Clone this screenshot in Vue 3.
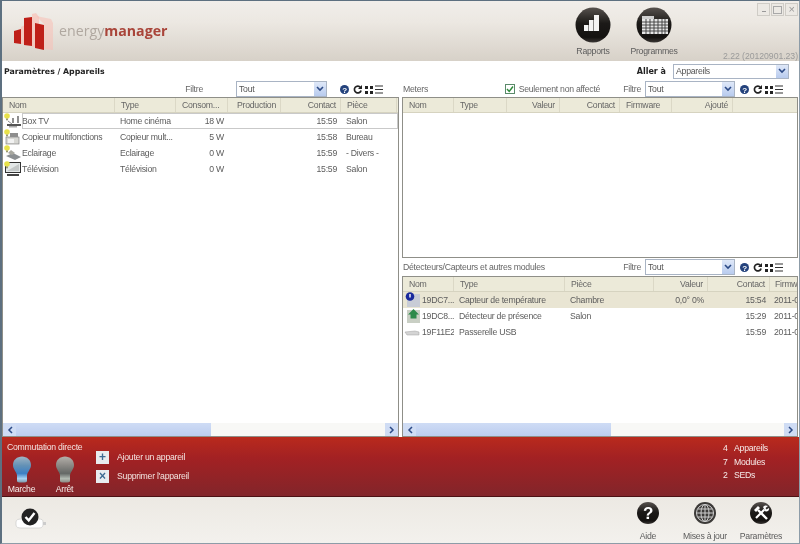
<script setup>
const leftCols = [
  { key: 'nom', label: 'Nom', w: 112 },
  { key: 'type', label: 'Type', w: 61 },
  { key: 'conso', label: 'Consom...', w: 52, right: true, headLeft: true },
  { key: 'prod', label: 'Production', w: 53, right: true },
  { key: 'contact', label: 'Contact', w: 60, right: true },
  { key: 'piece', label: 'Pièce', w: 56 }
]
const leftRows = [
  { icon: 'box', nom: 'Box TV', type: 'Home cinéma', conso: '18 W', prod: '', contact: '15:59', piece: 'Salon', focus: true },
  { icon: 'copy', nom: 'Copieur multifonctions', type: 'Copieur mult...', conso: '5 W', prod: '', contact: '15:58', piece: 'Bureau' },
  { icon: 'lamp', nom: 'Eclairage', type: 'Eclairage', conso: '0 W', prod: '', contact: '15:59', piece: '- Divers -' },
  { icon: 'tv', nom: 'Télévision', type: 'Télévision', conso: '0 W', prod: '', contact: '15:59', piece: 'Salon' }
]
const meterCols = [
  { key: 'nom', label: 'Nom', w: 51 },
  { key: 'type', label: 'Type', w: 53 },
  { key: 'valeur', label: 'Valeur', w: 53, right: true },
  { key: 'contact', label: 'Contact', w: 60, right: true },
  { key: 'firmware', label: 'Firmware', w: 52 },
  { key: 'ajoute', label: 'Ajouté', w: 61, right: true }
]
const moduleCols = [
  { key: 'nom', label: 'Nom', w: 51 },
  { key: 'type', label: 'Type', w: 111 },
  { key: 'piece', label: 'Pièce', w: 89 },
  { key: 'valeur', label: 'Valeur', w: 54, right: true },
  { key: 'contact', label: 'Contact', w: 62, right: true },
  { key: 'firmware', label: 'Firmw', w: 28 }
]
const moduleRows = [
  { icon: 'sensor', nom: '19DC7...', type: 'Capteur de température', piece: 'Chambre', valeur: '0,0°  0%', contact: '15:54', firmware: '2011-0', selected: true },
  { icon: 'home', nom: '19DC8...', type: 'Détecteur de présence', piece: 'Salon', valeur: '', contact: '15:29', firmware: '2011-0' },
  { icon: 'usb', nom: '19F11E2', type: 'Passerelle USB', piece: '', valeur: '', contact: '15:59', firmware: '2011-0' }
]
const counts = [
  { n: 4, label: 'Appareils' },
  { n: 7, label: 'Modules' },
  { n: 2, label: 'SEDs' }
]
</script>

<template>
  <div class="window">
    <header class="top">
      <div class="logo">
        <svg width="58" height="46" viewBox="0 0 58 46">
          <path d="M9 19l4 -2v19H9zM20 6l4 -1 3 4v7l-4 -1v24h-3z" fill="#f8c0b6" opacity="0.7" />
          <path d="M24 8l15 3 2 4v27l-9 -1V16z" fill="#f8c0b6" opacity="0.55" />
          <path d="M2 23l7 -2v15l-7 -1z" fill="#bf1f18" />
          <path d="M12 10l8 -1v29l-8 -1z" fill="#bf1f18" />
          <path d="M23 15l9 2v25l-9 -2z" fill="#bf1f18" />
        </svg>
        <span class="logo-text">energy<b>manager</b></span>
      </div>
      <nav class="top-nav">
        <div class="round-btn rapports">
          <svg width="36" height="36" viewBox="0 0 36 36">
            <defs>
              <linearGradient id="blk" x1="0" y1="0" x2="0" y2="1">
                <stop offset="0" stop-color="#57524e" />
                <stop offset="0.45" stop-color="#1c1a18" />
                <stop offset="0.85" stop-color="#141210" />
                <stop offset="1" stop-color="#3a3634" />
              </linearGradient>
            </defs>
            <circle cx="18" cy="18" r="17.500" fill="url(#blk)" />
            <path d="M9 24v-6h4.500v6zM14 24V13h4.500v11zM19 24V8h5v16z" fill="#f4f4f4" />
          </svg>
          <span>Rapports</span>
        </div>
        <div class="round-btn progs">
          <svg width="36" height="36" viewBox="0 0 36 36">
            <circle cx="18" cy="18" r="17.500" fill="url(#blk)" />
            <rect x="6" y="12" width="26" height="15" fill="#e6e6e6" />
            <rect x="6" y="9" width="12" height="3" fill="#cfcfcf" />
            <path d="M6 15h26M6 18h26M6 21h26M6 24h26M10 12v15M14 12v15M18 12v15M22 12v15M26 12v15M29 12v15" stroke="#3a3a3a" stroke-width="0.900" />
          </svg>
          <span>Programmes</span>
        </div>
      </nav>
      <div class="top-right">
        <div class="win-btns">
          <span class="win-btn"><i class="w-min"></i></span>
          <span class="win-btn"><i class="w-max"></i></span>
          <span class="win-btn">×</span>
        </div>
        <div class="version">2.22 (20120901.23)</div>
      </div>
    </header>

    <main class="body">
      <section class="panel left">
        <div class="crumb-row">
          <span class="crumb">Paramètres / Appareils</span>
        </div>
        <div class="toolbar left-bar">
          <span class="lbl filtre-left">Filtre</span>
          <div class="select f-select">
            <span>Tout</span>
            <i class="sel-arrow"><svg width="8" height="6" viewBox="0 0 8 6"><path d="M1 1l3 3 3 -3" fill="none" stroke="#2c4a86" stroke-width="1.600" /></svg></i>
          </div>
          <div class="tools">
            <svg width="43" height="11" viewBox="0 0 43 11">
              <circle cx="4.500" cy="5.500" r="4.500" fill="#24427c" />
              <text x="4.500" y="8.500" class="q">?</text>
              <path d="M20.500 3.400a3.400 3.400 0 1 0 .6 3" fill="none" stroke="#222" stroke-width="1.700" />
              <path d="M22 1v4h-4z" fill="#222" />
              <path d="M25 2h3v3h-3zM30 2h3v3h-3zM25 7h3v3h-3zM30 7h3v3h-3z" fill="#222" />
              <path d="M35 2h8M35 5.500h8M35 9h8" stroke="#333" stroke-width="1.200" />
            </svg>
          </div>
        </div>
        <div class="grid-box full">
          <div class="grid-head">
            <div v-for="c in leftCols" :key="c.key" class="hcell" :class="{ right: c.right && !c.headLeft }" :style="{ width: c.w + 'px' }">{{ c.label }}</div>
          </div>
          <div class="grid-body">
            <div v-for="r in leftRows" :key="r.nom" class="row" :class="{ focus: r.focus }">
              <div v-for="c in leftCols" :key="c.key" class="cell" :class="{ right: c.right }" :style="{ width: c.w + 'px' }">
                <template v-if="c.key === 'nom'">
                  <svg class="row-icon" width="18" height="16" viewBox="0 0 18 16">
                    <g v-if="r.icon === 'box'">
                      <rect x="3" y="11" width="14" height="2" fill="#555" />
                      <path d="M9 5v5M14 3v7" stroke="#555" stroke-width="1.300" />
                      <path d="M4 8l4 3" stroke="#888" />
                      <rect x="5" y="13" width="8" height="1.500" fill="#aaa" />
                    </g>
                    <g v-if="r.icon === 'copy'">
                      <rect x="2" y="8" width="13" height="7" fill="#d8d8d4" stroke="#777" stroke-width="0.600" />
                      <rect x="6" y="4" width="8" height="4" fill="#8e8e8e" />
                      <rect x="4" y="10" width="6" height="4" fill="#f2f2f2" />
                    </g>
                    <g v-if="r.icon === 'lamp'">
                      <path d="M2 11l7 -3 8 4 -6 3z" fill="#8b8f92" />
                      <path d="M4 8l3 -3 4 3 -3 2z" fill="#a8a8a0" />
                    </g>
                    <g v-if="r.icon === 'tv'">
                      <rect x="1.500" y="1.500" width="15" height="10" fill="#e4e8e8" stroke="#333" stroke-width="1" />
                      <path d="M3 10l12 -7v7z" fill="#c4c8c8" />
                      <rect x="3" y="13" width="12" height="2" fill="#444" />
                    </g>
                    <circle cx="3" cy="3" r="2.800" fill="#e8e24a" />
                    <rect x="2" y="5.500" width="2" height="1.800" fill="#9a9a70" />
                  </svg>
                </template>
                <span class="cell-text">{{ r[c.key] }}</span>
              </div>
            </div>
          </div>
          <div class="scroll">
            <i class="sc-btn"><svg width="6" height="8" viewBox="0 0 6 8"><path d="M5 1L2 4l3 3" fill="none" stroke="#2c4a86" stroke-width="1.500" /></svg></i>
            <div class="sc-track"><div class="sc-thumb left-thumb"></div></div>
            <i class="sc-btn"><svg width="6" height="8" viewBox="0 0 6 8"><path d="M1 1l3 3 -3 3" fill="none" stroke="#2c4a86" stroke-width="1.500" /></svg></i>
          </div>
        </div>
      </section>

      <section class="panel right-panel">
        <div class="crumb-row goto">
          <b>Aller à</b>
          <div class="select goto-select">
            <span>Appareils</span>
            <i class="sel-arrow"><svg width="8" height="6" viewBox="0 0 8 6"><path d="M1 1l3 3 3 -3" fill="none" stroke="#2c4a86" stroke-width="1.600" /></svg></i>
          </div>
        </div>
        <div class="toolbar r-bar">
          <span class="lbl sect">Meters</span>
          <span class="check"><svg width="8" height="8" viewBox="0 0 8 8"><path d="M1 4l2.200 2.400L7 1.500" fill="none" stroke="#2f8a3a" stroke-width="1.500" /></svg></span>
          <span class="lbl check-lbl">Seulement non affecté</span>
          <span class="lbl">Filtre</span>
          <div class="select r-select">
            <span>Tout</span>
            <i class="sel-arrow"><svg width="8" height="6" viewBox="0 0 8 6"><path d="M1 1l3 3 3 -3" fill="none" stroke="#2c4a86" stroke-width="1.600" /></svg></i>
          </div>
          <div class="tools">
            <svg width="43" height="11" viewBox="0 0 43 11">
              <circle cx="4.500" cy="5.500" r="4.500" fill="#24427c" />
              <text x="4.500" y="8.500" class="q">?</text>
              <path d="M20.500 3.400a3.400 3.400 0 1 0 .6 3" fill="none" stroke="#222" stroke-width="1.700" />
              <path d="M22 1v4h-4z" fill="#222" />
              <path d="M25 2h3v3h-3zM30 2h3v3h-3zM25 7h3v3h-3zM30 7h3v3h-3z" fill="#222" />
              <path d="M35 2h8M35 5.500h8M35 9h8" stroke="#333" stroke-width="1.200" />
            </svg>
          </div>
        </div>
        <div class="grid-box meters">
          <div class="grid-head">
            <div v-for="c in meterCols" :key="c.key" class="hcell" :class="{ right: c.right }" :style="{ width: c.w + 'px' }">{{ c.label }}</div>
          </div>
        </div>
        <div class="toolbar r-bar second">
          <span class="lbl sect">Détecteurs/Capteurs et autres modules</span>
          <span class="lbl">Filtre</span>
          <div class="select r-select">
            <span>Tout</span>
            <i class="sel-arrow"><svg width="8" height="6" viewBox="0 0 8 6"><path d="M1 1l3 3 3 -3" fill="none" stroke="#2c4a86" stroke-width="1.600" /></svg></i>
          </div>
          <div class="tools">
            <svg width="43" height="11" viewBox="0 0 43 11">
              <circle cx="4.500" cy="5.500" r="4.500" fill="#24427c" />
              <text x="4.500" y="8.500" class="q">?</text>
              <path d="M20.500 3.400a3.400 3.400 0 1 0 .6 3" fill="none" stroke="#222" stroke-width="1.700" />
              <path d="M22 1v4h-4z" fill="#222" />
              <path d="M25 2h3v3h-3zM30 2h3v3h-3zM25 7h3v3h-3zM30 7h3v3h-3z" fill="#222" />
              <path d="M35 2h8M35 5.500h8M35 9h8" stroke="#333" stroke-width="1.200" />
            </svg>
          </div>
        </div>
        <div class="grid-box full">
          <div class="grid-head">
            <div v-for="c in moduleCols" :key="c.key" class="hcell" :class="{ right: c.right, fw: c.key === 'firmware' }" :style="{ width: c.w + 'px' }">{{ c.label }}</div>
          </div>
          <div class="grid-body">
            <div v-for="r in moduleRows" :key="r.nom" class="row" :class="{ selected: r.selected }">
              <div v-for="c in moduleCols" :key="c.key" class="cell" :class="{ right: c.right, fw: c.key === 'firmware' }" :style="{ width: c.w + 'px' }">
                <template v-if="c.key === 'nom'">
                  <svg class="row-icon mod-icon" width="16" height="16" viewBox="0 0 16 16">
                    <g v-if="r.icon === 'sensor'">
                      <rect x="3" y="2" width="13" height="13" fill="#c8ccd6" />
                      <circle cx="6" cy="4.500" r="4.300" fill="#1a2a9c" />
                      <rect x="5.300" y="2" width="1.400" height="3.500" fill="#fff" />
                    </g>
                    <g v-if="r.icon === 'home'">
                      <rect x="3" y="2" width="13" height="13" fill="#c9cfc4" />
                      <path d="M9.500 1l5.500 5.500h-2.500v4h-6v-4H4z" fill="#2e8a4a" />
                    </g>
                    <g v-if="r.icon === 'usb'">
                      <path d="M1 8l10 -1 4 1v3H3z" fill="#d4d4d4" stroke="#a0a0a0" stroke-width="0.500" />
                    </g>
                  </svg>
                </template>
                <span class="cell-text">{{ r[c.key] }}</span>
              </div>
            </div>
          </div>
          <div class="scroll">
            <i class="sc-btn"><svg width="6" height="8" viewBox="0 0 6 8"><path d="M5 1L2 4l3 3" fill="none" stroke="#2c4a86" stroke-width="1.500" /></svg></i>
            <div class="sc-track"><div class="sc-thumb right-thumb"></div></div>
            <i class="sc-btn"><svg width="6" height="8" viewBox="0 0 6 8"><path d="M1 1l3 3 -3 3" fill="none" stroke="#2c4a86" stroke-width="1.500" /></svg></i>
          </div>
        </div>
      </section>
    </main>

    <section class="red">
      <div class="direct">
        <div class="direct-title">Commutation directe</div>
        <div class="bulbs">
          <div class="bulb">
            <svg width="20" height="27" viewBox="0 0 20 27">
              <defs>
                <linearGradient id="bulbOn" x1="0" y1="0" x2="0" y2="1">
                  <stop offset="0" stop-color="#9fb4c4" />
                  <stop offset="0.35" stop-color="#6391b6" />
                  <stop offset="0.65" stop-color="#3c7fc4" />
                  <stop offset="0.85" stop-color="#a6d2f2" />
                  <stop offset="1" stop-color="#7d98a8" />
                </linearGradient>
                <linearGradient id="bulbOff" x1="0" y1="0" x2="0" y2="1">
                  <stop offset="0" stop-color="#b4b0aa" />
                  <stop offset="0.35" stop-color="#8a8884" />
                  <stop offset="0.65" stop-color="#646866" />
                  <stop offset="0.85" stop-color="#b2bab2" />
                  <stop offset="1" stop-color="#8a8a84" />
                </linearGradient>
              </defs>
              <path d="M10 0.500c5 0 9 3.500 9 8.500 0 4-3 6-4 10v6c0 1-1.500 1.500-5 1.500s-5-.5-5-1.500v-6C4 15 1 13 1 9 1 4 5 .5 10 .5z" fill="url(#bulbOn)" />
            </svg>
            <span>Marche</span>
          </div>
          <div class="bulb">
            <svg width="20" height="27" viewBox="0 0 20 27">
              <path d="M10 0.500c5 0 9 3.500 9 8.500 0 4-3 6-4 10v6c0 1-1.500 1.500-5 1.500s-5-.5-5-1.500v-6C4 15 1 13 1 9 1 4 5 .5 10 .5z" fill="url(#bulbOff)" />
            </svg>
            <span>Arrêt</span>
          </div>
        </div>
      </div>
      <div class="actions">
        <div class="action"><i class="act-ico">+</i><span>Ajouter un appareil</span></div>
        <div class="action"><i class="act-ico">×</i><span>Supprimer l'appareil</span></div>
      </div>
      <div class="counts">
        <div v-for="c in counts" :key="c.label" class="count">
          <span class="count-n">{{ c.n }}</span><span>{{ c.label }}</span>
        </div>
      </div>
    </section>

    <footer class="bottom">
      <svg class="usb-ok" width="32" height="24" viewBox="0 0 32 24">
        <path d="M1 15c0 -2 2 -3 5 -3h18c3 0 4 1 4 3v3c0 2 -2 3 -4 3H6c-3 0 -5 -1 -5 -3z" fill="#fff" stroke="#c4c4c4" stroke-width="0.600" />
        <rect x="28" y="15" width="3" height="3" fill="#ccc" />
        <circle cx="15" cy="10" r="8.500" fill="#222" />
        <path d="M10.500 10l3.200 3.400L19.500 6" fill="none" stroke="#fff" stroke-width="2.400" />
      </svg>
      <nav class="bottom-nav">
        <div class="round-btn small aide">
          <svg width="24" height="24" viewBox="0 0 24 24">
            <circle cx="12" cy="12" r="11" fill="url(#blk)" />
            <text x="12" y="18" class="big-q">?</text>
          </svg>
          <span>Aide</span>
        </div>
        <div class="round-btn small maj">
          <svg width="24" height="24" viewBox="0 0 24 24">
            <circle cx="12" cy="12" r="11" fill="#3c3a38" />
            <circle cx="12" cy="12" r="8.500" fill="none" stroke="#cfcfcf" stroke-width="1" />
            <ellipse cx="12" cy="12" rx="4" ry="8.500" fill="none" stroke="#cfcfcf" stroke-width="1" />
            <path d="M3.500 12h17M4.500 8h15M4.500 16h15M12 3.500v17" stroke="#cfcfcf" stroke-width="1" />
          </svg>
          <span>Mises à jour</span>
        </div>
        <div class="round-btn small params">
          <svg width="24" height="24" viewBox="0 0 24 24">
            <circle cx="12" cy="12" r="11" fill="url(#blk)" />
            <path d="M9 9l9 9" stroke="#fff" stroke-width="2.400" />
            <path d="M5 9l4 -4 2 2 -4 4z" fill="#fff" />
            <path d="M15.500 8.500L7 17" stroke="#fff" stroke-width="2.200" />
            <path d="M14 6c1 -1.500 3 -2 5 -1l-2.500 2 1 1.500 2.500 -1.500c.5 2 -1 4 -3.500 3.500z" fill="#fff" />
          </svg>
          <span>Paramètres</span>
        </div>
      </nav>
    </footer>
  </div>
</template>

<style>
html, body { margin: 0; background: #fff; }
</style>

<style scoped>
.window {
  width: 800px;
  height: 544px;
  box-sizing: border-box;
  display: flex;
  flex-direction: column;
  border-left: 2px solid #5d7080;
  border-top: 1px solid #5d7080;
  border-right: 1px solid #8d9ca8;
  border-bottom: 1px solid #8d9ca8;
  font-family: "Liberation Sans", Arial, sans-serif;
  font-size: 8.700px;
  letter-spacing: -0.25px;
  color: #5c5c5c;
  background: #fff;
  overflow: hidden;
  filter: blur(0.3px);
}

/* header */
.top {
  height: 60px;
  flex-shrink: 0;
  display: flex;
  background: linear-gradient(#f1eeea, #ece8e2 35%, #d7d1c8);
}
.logo {
  display: flex;
  align-items: center;
  width: 572px;
  padding-left: 10px;
  box-sizing: border-box;
}
.logo-text {
  font-family: "Open Sans", sans-serif;
  font-size: 14.200px;
  letter-spacing: 0;
  color: #b0a8a0;
  margin-left: -11px;
  margin-top: -1px;
}
.logo-text b {
  color: #a9453a;
  font-weight: 700;
}
.top-nav {
  display: flex;
  width: 148px;
}
.round-btn {
  display: flex;
  flex-direction: column;
  align-items: center;
  padding-top: 6px;
  gap: 3px;
  white-space: nowrap;
}
.round-btn.rapports {
  width: 38px;
  margin-right: 22px;
}
.round-btn.progs {
  width: 40px;
}
.top-right {
  flex: 1;
  display: flex;
  flex-direction: column;
  align-items: flex-end;
  justify-content: space-between;
  padding: 2px 1px 0 0;
}
.win-btns {
  display: flex;
  gap: 1px;
}
.win-btn {
  width: 13px;
  height: 13px;
  border: 1px solid #cfccc6;
  box-sizing: border-box;
  background: #ece9e4;
  display: flex;
  align-items: center;
  justify-content: center;
  color: #999;
  font-size: 11px;
  line-height: 1;
}
.w-min { width: 4px; height: 1px; background: #999; margin-top: 4px; }
.w-max { width: 7px; height: 6px; border: 1px solid #a8a8a8; }
.version {
  font-size: 8.700px;
  letter-spacing: -0.05px;
  color: #9b9b9b;
  line-height: 10px;
}

/* body */
.body {
  height: 376px;
  flex-shrink: 0;
  display: flex;
  background: #fff;
}
.panel {
  display: flex;
  flex-direction: column;
  box-sizing: border-box;
}
.panel.left {
  width: 397px;
  margin-right: 3px;
}
.right-panel {
  width: 396px;
}
.crumb-row {
  height: 20px;
  flex-shrink: 0;
  display: flex;
  align-items: center;
  padding-left: 2px;
}
.crumb {
  font-family: "DejaVu Sans", sans-serif;
  font-weight: bold;
  font-size: 7.800px;
  letter-spacing: 0;
  color: #222;
}
.goto {
  justify-content: flex-end;
  padding-right: 9px;
}
.goto b {
  font-family: "DejaVu Sans", sans-serif;
  font-size: 8px;
  letter-spacing: 0;
  color: #222;
  margin-right: 7px;
}
.goto-select {
  width: 116px;
  height: 15px;
}
.toolbar {
  height: 16px;
  display: flex;
  align-items: center;
  flex-shrink: 0;
}
.lbl {
  color: #666;
}
.sect {
  margin-right: auto;
  padding-left: 1px;
}
.left-bar {
  justify-content: flex-end;
  padding-right: 16px;
}
.r-bar {
  padding-right: 15px;
}
.filtre-left {
  margin-right: 33px;
}
.check {
  width: 10px;
  height: 10px;
  border: 1px solid #5a8a6a;
  box-sizing: border-box;
  display: flex;
  align-items: center;
  justify-content: center;
  margin-right: 4px;
  flex-shrink: 0;
}
.check-lbl {
  margin-right: 23px;
}
.select {
  display: flex;
  align-items: center;
  justify-content: space-between;
  border: 1px solid #a9b4c4;
  box-sizing: border-box;
  background: #fff;
  padding-left: 2px;
  color: #555;
}
.f-select {
  width: 91px;
  height: 16px;
}
.r-select {
  width: 90px;
  height: 16px;
  margin-left: 4px;
}
.sel-arrow {
  width: 12px;
  align-self: stretch;
  background: linear-gradient(#dfe8f8, #b8cbee);
  display: flex;
  align-items: center;
  justify-content: center;
}
.tools {
  margin-left: 5px;
  height: 11px;
  display: flex;
}
.left-bar .tools {
  margin-left: 13px;
}
.q {
  font-family: "Liberation Sans", sans-serif;
  font-size: 8px;
  font-weight: bold;
  fill: #fff;
  text-anchor: middle;
}

/* tables */
.grid-box {
  border: 1px solid #8f8f88;
  display: flex;
  flex-direction: column;
  box-sizing: border-box;
  position: relative;
  background: #fff;
  min-height: 0;
}
.full {
  flex: 1;
}
.meters {
  height: 161px;
  flex-shrink: 0;
}
.second {
  height: 18px;
}
.grid-head {
  height: 15px;
  box-sizing: border-box;
  display: flex;
  flex-shrink: 0;
  background: #ecead9;
  border-bottom: 1px solid #d6d3c0;
  overflow: hidden;
}
.hcell {
  flex-shrink: 0;
  box-sizing: border-box;
  padding: 0 4px 0 6px;
  line-height: 14px;
  border-right: 1px solid #dbd8c6;
  white-space: nowrap;
  color: #666;
}
.hcell.right {
  text-align: right;
}
.hcell.fw {
  padding: 0 0 0 5px;
  border-right: 0;
}
.grid-body {
  flex: 1;
  overflow: hidden;
}
.row {
  height: 16px;
  display: flex;
  box-sizing: border-box;
}
.row.selected {
  background: #e9e5d3;
}
.focus {
  position: relative;
}
.focus::after {
  content: "";
  position: absolute;
  left: 19px;
  right: 0;
  top: 0;
  bottom: 0;
  border: 1px solid #c9c9c9;
  pointer-events: none;
}
.cell {
  flex-shrink: 0;
  box-sizing: border-box;
  padding: 0 4px 0 5px;
  line-height: 15px;
  white-space: nowrap;
  overflow: hidden;
  display: flex;
  align-items: center;
}
.cell.right {
  justify-content: flex-end;
}
.cell.fw {
  padding: 0 0 0 4px;
}
.cell:first-child {
  padding: 0 0 0 1px;
}
.row-icon {
  flex-shrink: 0;
}
.mod-icon {
  margin-right: 2px;
}
.scroll {
  height: 13px;
  display: flex;
  flex-shrink: 0;
  background: #f8f8f6;
}
.sc-btn {
  width: 13px;
  display: flex;
  align-items: center;
  justify-content: center;
  background: #cfdcf4;
}
.sc-track {
  flex: 1;
  display: flex;
}
.sc-thumb {
  background: linear-gradient(#cfdcf5, #bccdef);
}
.left-thumb {
  width: 195px;
}
.right-thumb {
  width: 195px;
}

/* red band */
.red {
  height: 60px;
  flex-shrink: 0;
  display: flex;
  background: linear-gradient(#b92a1d, #a32123 35%, #82252a);
  border-bottom: 1px solid #4c1114;
  box-sizing: border-box;
  color: #f3e3df;
}
.direct {
  width: 94px;
  padding: 5px 0 0 5px;
  box-sizing: border-box;
}
.direct-title {
  line-height: 11px;
}
.bulbs {
  display: flex;
  padding-left: 1px;
  gap: 16px;
}
.bulb {
  display: flex;
  flex-direction: column;
  align-items: center;
  width: 27px;
  margin-top: 3px;
  color: #f6ecea;
}
.bulb span {
  margin-top: 1px;
  line-height: 10px;
}
.actions {
  display: flex;
  flex-direction: column;
  gap: 5px;
  padding-top: 13px;
  flex: 1;
}
.action {
  display: flex;
  align-items: center;
  gap: 8px;
  height: 14px;
}
.act-ico {
  width: 13px;
  height: 13px;
  background: #e8ecf0;
  color: #3e6a92;
  font-style: normal;
  font-weight: bold;
  font-size: 12px;
  line-height: 13px;
  text-align: center;
}
.counts {
  width: 76px;
  padding-top: 5px;
}
.count {
  display: flex;
  height: 13.500px;
  line-height: 13px;
  color: #f6ecea;
}
.count-n {
  width: 11px;
}

/* footer */
.bottom {
  flex: 1;
  display: flex;
  justify-content: space-between;
  background: linear-gradient(#ece9e3, #f3f1ed);
}
.usb-ok {
  margin: 10px 0 0 13px;
}
.bottom-nav {
  display: flex;
}
.round-btn.small {
  padding-top: 4px;
  gap: 6px;
}
.round-btn.aide { width: 40px; margin-right: 11px; }
.round-btn.maj { width: 52px; margin-right: 7px; }
.round-btn.params { width: 46px; margin-right: 15px; }
.big-q {
  font-family: "Liberation Sans", sans-serif;
  font-size: 17px;
  font-weight: bold;
  fill: #fff;
  text-anchor: middle;
}
</style>
